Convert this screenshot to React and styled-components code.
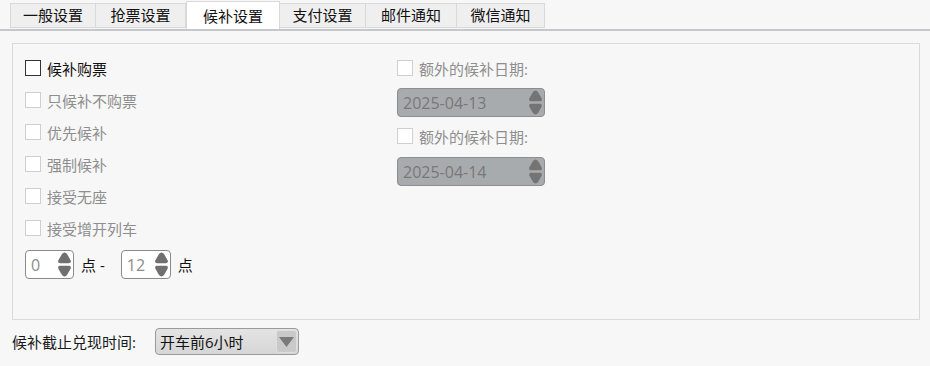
import React, { useState } from 'react';
import styled, { createGlobalStyle } from 'styled-components';

const GlobalStyle = createGlobalStyle`
  html, body {
    margin: 0;
    padding: 0;
    background: #f7f7f7;
  }
  body {
    font-family: "Open Sans", "Noto Sans CJK SC", "Liberation Sans", sans-serif;
    font-size: 15px;
    color: #1a1a1a;
  }
`

const Page = styled.div`
  width: 930px;
  height: 366px;
  background: #f7f7f7;
  overflow: hidden;
`

const TabBar = styled.div`
  display: flex;
  align-items: flex-end;
  height: 29px;
  padding-left: 10px;
  border-bottom: 2px solid #c5c8cb;
`

const Tab = styled.div`
  box-sizing: border-box;
  display: flex;
  align-items: center;
  justify-content: center;
  height: ${p => (p.$active ? '28px' : '25px')};
  margin-bottom: ${p => (p.$active ? '0' : '1px')};
  width: ${p => p.$w}px;
  background: ${p => (p.$active ? '#ffffff' : '#efefef')};
  border: 1px solid #d9d9d9;
  border-bottom: ${p => (p.$active ? 'none' : '1px solid #d9d9d9')};
  border-left: ${p => (p.$first || p.$active ? '1px solid #d9d9d9' : 'none')};
  font-size: 15px;
  line-height: 1;
  color: #111;
  cursor: pointer;
  padding-top: ${p => (p.$active ? '1px' : '0')};
`

const Panel = styled.div`
  box-sizing: border-box;
  margin: 12px 10px 0 12px;
  height: 277px;
  border: 1px solid #dadada;
  display: flex;
  padding: 8px 0 0 12px;
`

const LeftCol = styled.div`
  width: 372px;
  display: flex;
  flex-direction: column;
`

const RightCol = styled.div`
  display: flex;
  flex-direction: column;
`

const CheckRow = styled.label`
  display: flex;
  align-items: center;
  height: 32px;
  margin-top: ${p => p.$mt || 0}px;
  gap: 6px;
  color: ${p => (p.$disabled ? '#8e8e8e' : '#111')};
  cursor: ${p => (p.$disabled ? 'default' : 'pointer')};
`

const Box = styled.span`
  box-sizing: border-box;
  width: 16px;
  height: 16px;
  background: #fff;
  border: 1px solid ${p => (p.$disabled ? '#cfcfcf' : '#333')};
  display: inline-flex;
  align-items: center;
  justify-content: center;
`

const SpinRow = styled.div`
  display: flex;
  align-items: center;
  margin-top: 6px;
  height: 29px;
`

const Spinner = styled.div`
  box-sizing: border-box;
  width: ${p => p.$w}px;
  height: 29px;
  border: 1px solid ${p => p.$border || '#8a8a8a'};
  border-radius: 4px;
  background: ${p => p.$bg || '#fff'};
  display: flex;
  align-items: center;
  justify-content: space-between;
  padding: 0 1px 0 ${p => p.$pl || 5}px;
  margin-top: ${p => p.$mt || 0}px;
  color: ${p => p.$color || '#8c8c8c'};
  font-size: 16px;
`

const Unit = styled.span`
  margin: 0 ${p => p.$mr || 0}px 0 7px;
  color: #111;
`

const Footer = styled.div`
  display: flex;
  align-items: center;
  padding: 8px 0 0 12px;
`

const FooterLabel = styled.span`
  width: 143px;
  color: #1a1a1a;
`

const Combo = styled.div`
  box-sizing: border-box;
  width: 144px;
  height: 27px;
  border: 1px solid #9a9a9a;
  border-radius: 4px;
  background: linear-gradient(#e4e4e4, #d6d6d6);
  display: flex;
  align-items: center;
  justify-content: space-between;
  padding: 0 1px 0 4px;
  color: #111;
`

const ComboArrow = styled.div`
  box-sizing: border-box;
  width: 21px;
  height: 23px;
  border-radius: 3px;
  background: #c9c9c9;
  border: 1px solid #dedede;
  display: flex;
  align-items: center;
  justify-content: center;
`

// spinner up/down buttons, rounded triangles
function Arrows({ color }) {
  return (
    <svg width="15" height="27" viewBox="0 0 15 27">
      <path d="M7.5 1.5 Q9 1.5 10.3 3.6 L13.6 9.2 Q14.6 12.3 11.8 12.3 L3.2 12.3 Q0.4 12.3 1.4 9.2 L4.7 3.6 Q6 1.5 7.5 1.5 Z" fill={color} />
      <path d="M7.5 25.5 Q9 25.5 10.3 23.4 L13.6 17.8 Q14.6 14.7 11.8 14.7 L3.2 14.7 Q0.4 14.7 1.4 17.8 L4.7 23.4 Q6 25.5 7.5 25.5 Z" fill={color} />
    </svg>
  )
}

function Check({ label, disabled, mt, checked, onToggle }) {
  return (
    <CheckRow $disabled={disabled} $mt={mt} onClick={() => !disabled && onToggle && onToggle()}>
      <Box $disabled={disabled}>
        {checked && (
          <svg width="10" height="10" viewBox="0 0 10 10">
            <path d="M1.5 5 L4 7.5 L8.5 2" stroke="#333" strokeWidth="1.6" fill="none" />
          </svg>
        )}
      </Box>
      {label}
    </CheckRow>
  )
}

export default function App() {
  const tabs = [
    { label: '一般设置', w: 86 },
    { label: '抢票设置', w: 90 },
    { label: '候补设置', w: 94 },
    { label: '支付设置', w: 86 },
    { label: '邮件通知', w: 91 },
    { label: '微信通知', w: 88 },
  ]
  const [active, setActive] = useState(2)
  const [enabled, setEnabled] = useState(false)

  const options = ['只候补不购票', '优先候补', '强制候补', '接受无座', '接受增开列车']

  return (
    <Page>
      <GlobalStyle />
      <TabBar>
        {tabs.map((t, i) => (
          <Tab key={t.label} $w={t.w} $first={i === 0} $active={active === i} onClick={() => setActive(i)}>
            {t.label}
          </Tab>
        ))}
      </TabBar>

      <Panel>
        <LeftCol>
          <Check label="候补购票" checked={enabled} onToggle={() => setEnabled(!enabled)} />
          {options.map(o => (
            <Check key={o} label={o} disabled={!enabled} />
          ))}
          <SpinRow>
            <Spinner $w={49}>
              0
              <Arrows color="#707070" />
            </Spinner>
            <Unit $mr={16}>点 -</Unit>
            <Spinner $w={50}>
              12
              <Arrows color="#707070" />
            </Spinner>
            <Unit>点</Unit>
          </SpinRow>
        </LeftCol>

        <RightCol>
          <Check label="额外的候补日期:" disabled />
          <Spinner $w={148} $mt={4} $bg="#a8abae" $border="#8d8d8d" $color="#787878">
            2025-04-13
            <Arrows color="#747474" />
          </Spinner>
          <Check label="额外的候补日期:" disabled mt={3} />
          <Spinner $w={148} $mt={5} $bg="#a8abae" $border="#8d8d8d" $color="#787878">
            2025-04-14
            <Arrows color="#747474" />
          </Spinner>
        </RightCol>
      </Panel>

      <Footer>
        <FooterLabel>候补截止兑现时间:</FooterLabel>
        <Combo>
          开车前6小时
          <ComboArrow>
            <svg width="17" height="12" viewBox="0 0 17 12">
              <path d="M1 1 L16 1 L8.5 11 Z" fill="#7a7a7a" />
            </svg>
          </ComboArrow>
        </Combo>
      </Footer>
    </Page>
  )
}
